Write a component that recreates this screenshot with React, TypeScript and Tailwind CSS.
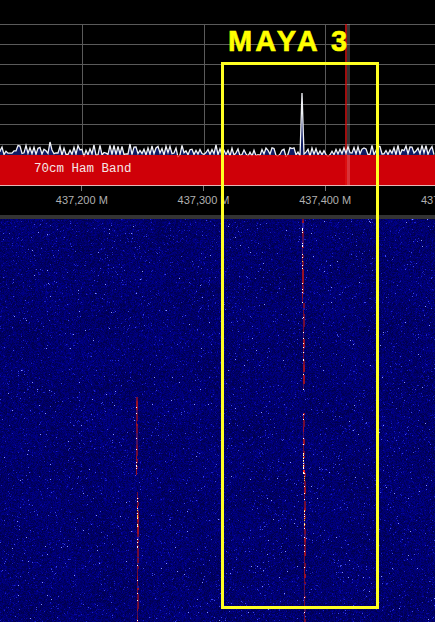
import React, { useMemo } from 'react';

const WIDTH = 435;
const WATERFALL_TOP = 219;
const WATERFALL_HEIGHT = 403;

const hLines = [24, 44, 64, 84, 104, 124, 144];
const vLines = [82, 204, 325];
const freqs = ['437,200 M', '437,300 M', '437,400 M', '437,500 M'];

// small seeded generator, the noise has to come out the same on every load
const makeRng = (seed: number) => () => {
    seed = (seed * 1664525 + 1013904223) >>> 0;
    seed ^= seed >>> 15;
    return (seed >>> 0) / 4294967296;
};

const noiseColors = ['#000050', '#000062', '#000074', '#000086', '#0808a4', '#1a22c8', '#3c48ea', '#8490ff'];

const pickLevel = (v: number, shift: number) => {
    if (v > 0.9988) return 7;
    if (v > 0.995) return 6;
    if (v > 0.984) return 5;
    if (v > 0.955) return 4;
    const n = v + shift;
    if (n < 0.2) return 0;
    if (n < 0.5) return 1;
    if (n < 0.78) return 2;
    return 3;
};

// one path per colour, runs of equal pixels merged so the paths stay small
const buildNoise = () => {
    const rng = makeRng(4711);
    const paths: string[] = noiseColors.map(() => '');
    for (let y = 0; y < WATERFALL_HEIGHT; y++) {
        const rowShift = (rng() - 0.5) * 0.06;
        let runStart = 0;
        let runLevel = -1;
        for (let x = 0; x <= WIDTH; x++) {
            const patch = Math.sin(x / 23 + y / 31) * Math.cos(y / 17 - x / 41) * 0.09;
            const level = x === WIDTH ? -2 : pickLevel(rng(), rowShift + patch);
            if (level !== runLevel) {
                if (runLevel >= 0) paths[runLevel] += `M${runStart} ${y + 0.5}h${x - runStart}`;
                runStart = x;
                runLevel = level;
            }
        }
    }
    return paths;
};

type Segment = { from: number; to: number; x0: number; x1: number };

const signalSegments: Segment[] = [
    { from: 219, to: 385, x0: 302.6, x1: 303.4 },
    { from: 413, to: 622, x0: 303.6, x1: 305 },
    { from: 397, to: 475, x0: 136.4, x1: 136.8 },
    { from: 492, to: 622, x0: 137, x1: 137.8 },
];

type SignalBit = { x: number; y: number; w: number; h: number; fill: string };

// the carrier shows as dark red dashes with single hot pixels on top
const buildSignals = () => {
    const rng = makeRng(99);
    const bits: SignalBit[] = [];
    signalSegments.forEach((s) => {
        let y = s.from;
        while (y < s.to) {
            const x = Math.floor(s.x0 + ((y - s.from) / (s.to - s.from)) * (s.x1 - s.x0));
            const hot = (y > 248 && y < 268) || (y > 445 && y < 480 && x > 300) || (y > 505 && y < 527);
            const h = 1 + Math.floor(rng() * (hot ? 3 : 7));
            const v = rng();
            let fill = '#700c38';
            if (v < 0.3) fill = '#981028';
            else if (v < 0.42) fill = hot ? '#f02020' : '#4c1060';
            else if (v < 0.5) fill = '#2418a0';
            const narrow = rng() > 0.6;
            bits.push({ x, y: y - WATERFALL_TOP, w: narrow ? 1 : 2, h, fill });
            if (rng() < (hot ? 0.8 : 0.36)) {
                const hotFill = hot && rng() > 0.6 ? '#ffc040' : '#ffffff';
                bits.push({ x, y: y - WATERFALL_TOP + h - 1, w: 1, h: hot ? 2 : 1, fill: hotFill });
            }
            y += h;
        }
    });
    return bits;
};

const buildTrace = () => {
    const rng = makeRng(2024);
    let line = 'M0 152';
    let area = 'M0 156L0 152';
    let up = true;
    for (let x = 0; x <= WIDTH; x += 2) {
        const quiet = x > 222 && x < 345;
        let y = up ? 151 - rng() * 6 : 152.5 + rng() * 2.5;
        if (quiet) y += up ? 2.5 : 1.2;
        if (rng() > 0.94) y += 2.5; // the odd dip down into the band
        if (x === 50) y = 142;
        if (x === 130) y = 144;
        if (x === 378 || x === 406) y = 146;
        if (x === 302) y = 93;
        up = !up;
        if (rng() > 0.8) up = !up;
        line += `L${x} ${y.toFixed(1)}`;
        area += `L${x} ${y.toFixed(1)}`;
    }
    area += `L${WIDTH} 156Z`;
    return { line, area };
};

const SpectrumTrace: React.FC = () => {
    const trace = useMemo(buildTrace, []);
    return (
        <svg width={WIDTH} height={155} className="relative z-10 block overflow-visible">
            <defs>
                <clipPath id="above-band">
                    <rect x={0} y={0} width={WIDTH} height={155} />
                </clipPath>
                <clipPath id="in-band">
                    <rect x={0} y={155} width={WIDTH} height={12} />
                </clipPath>
            </defs>
            {hLines.map((y) => (
                <line key={y} x1={0} x2={WIDTH} y1={y + 0.5} y2={y + 0.5} stroke="#5a5a5a" />
            ))}
            {vLines.map((x) => (
                <line key={x} x1={x + 0.5} x2={x + 0.5} y1={24} y2={155} stroke="#5a5a5a" />
            ))}
            <path d={trace.area} fill="#0f1c63" clipPath="url(#above-band)" />
            <rect x={347} y={24} width={3} height={161} fill="#ffffff" fillOpacity={0.2} />
            <rect x={345} y={24} width={2} height={161} fill="#e01414" fillOpacity={0.7} />
            <path d={trace.line} fill="none" stroke="#f0f2f6" strokeWidth={1.3} clipPath="url(#above-band)" />
            <path d={trace.line} fill="none" stroke="#f04848" strokeWidth={1} clipPath="url(#in-band)" />
        </svg>
    );
};

const Waterfall: React.FC = () => {
    const noise = useMemo(buildNoise, []);
    const signals = useMemo(buildSignals, []);
    return (
        <svg width={WIDTH} height={WATERFALL_HEIGHT} className="block blur-[0.45px]" shapeRendering="crispEdges">
            {noise.map((d, i) => (
                <path key={noiseColors[i]} d={d} stroke={noiseColors[i]} strokeWidth={1} fill="none" />
            ))}
            {signals.map((p, i) => (
                <rect key={i} x={p.x} y={p.y} width={p.w} height={p.h} fill={p.fill} />
            ))}
        </svg>
    );
};

export default function App() {
    return (
        <div className="relative w-[435px] h-[622px] overflow-hidden bg-black font-['Liberation_Sans',Arial,sans-serif]">
            {/* Spectrum */}
            <SpectrumTrace />
            <div className="flex items-center h-[31px] bg-[#cf0008] border-b border-[#e6b4b4] pl-[34px] pb-[2px]">
                <span className="font-['Liberation_Mono',monospace] text-[12.5px] text-[#f6e6e6]">70cm Ham Band</span>
            </div>

            {/* Frequency axis */}
            <div className="flex h-[29px] ml-[21px] w-[500px]">
                {freqs.map((f) => (
                    <div key={f} className="flex flex-col items-center w-[121.7px] shrink-0">
                        <div className="w-px h-[5px] bg-[#777777]" />
                        <span className="mt-[2px] text-[11px] leading-[14px] text-[#b0b0b0] whitespace-nowrap">{f}</span>
                    </div>
                ))}
            </div>
            <div className="h-[4px] bg-[#333333] relative z-10" />

            {/* Waterfall */}
            <Waterfall />

            {/* Annotation drawn over the plot */}
            <div className="absolute z-20 left-[228px] top-[25px] text-[29px] leading-[32px] font-bold tracking-[3.2px] text-[#ffff00] [-webkit-text-stroke:0.6px_#ffff00] whitespace-nowrap">
                MAYA 3
            </div>
            <div className="absolute z-20 left-[221px] top-[62px] w-[158px] h-[547px] border-[3px] border-[#ffff22]" />
        </div>
    );
}
